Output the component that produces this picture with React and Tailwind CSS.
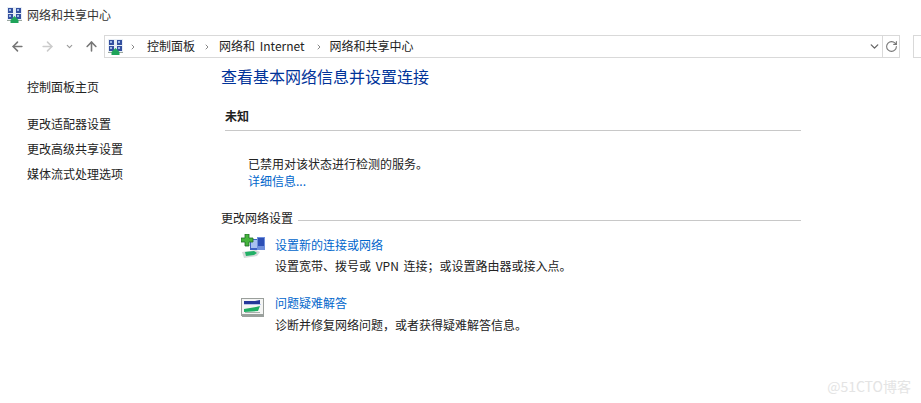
import { ArrowLeft, ArrowRight, ArrowUp, ChevronDown, ChevronRight, RotateCw } from "lucide-react";

function NetworkIcon() {
  return (
    <svg width="15" height="16" viewBox="0 0 15 16" className="shrink-0">
      <rect x="0" y="0" width="15" height="14" fill="#e8eef5" />
      <rect x="1" y="1" width="5" height="5" fill="#34509f" />
      <rect x="9" y="1" width="5" height="5" fill="#34509f" />
      <rect x="1" y="7" width="5" height="5" fill="#34509f" />
      <rect x="9" y="7" width="5" height="5" fill="#34509f" />
      <rect x="2" y="2" width="2" height="2" fill="#9db8e8" />
      <rect x="10" y="2" width="2" height="2" fill="#9db8e8" />
      <rect x="2" y="8" width="2" height="2" fill="#9db8e8" />
      <rect x="10" y="8" width="2" height="2" fill="#9db8e8" />
      <rect x="0" y="13" width="15" height="1" fill="#9aa7a0" />
      <path d="M7.5 9l4 4v3h-8v-3z" fill="#1fa45a" />
    </svg>
  );
}

function NewConnectionIcon() {
  return (
    <svg width="25" height="25" viewBox="0 0 25 25" className="shrink-0">
      <rect x="9" y="5" width="11" height="11" fill="#3f63c4" />
      <rect x="10" y="6" width="9" height="8" fill="#a9c1f0" />
      <rect x="16" y="3" width="8" height="13" fill="#6f8fdc" />
      <rect x="17" y="4" width="6" height="8" fill="#2d4fb5" />
      <path d="M4 0h4v4h4v4H8v4H4V8H0V4h4z" fill="#46b43c" stroke="#1d6b26" strokeWidth="0.8" />
      <path d="M1 18l14-2 4 2-3 4-13 2z" fill="#d5dada" />
      <path d="M4 18l9-1 3 2-3 2-8 1z" fill="#22b066" />
    </svg>
  );
}

function TroubleshootIcon() {
  return (
    <svg width="23" height="19" viewBox="0 0 23 19" className="shrink-0 mt-[5px]">
      <rect x="0.5" y="0.5" width="22" height="17" fill="#f4f5f4" stroke="#9a9f9b" />
      <rect x="1" y="16" width="22" height="3" fill="#9aa09c" />
      <path d="M3 3h11l5-1v4H3z" fill="#24389a" />
      <path d="M3 6h17v1H3z" fill="#b9c6ea" />
      <path d="M3 11l12-2 4-1-2 5-14 1z" fill="#1fae62" />
      <path d="M4 14h15v1H4z" fill="#aab0ac" />
    </svg>
  );
}

export default function App() {
  return (
    <div className="w-[921px] h-[403px] overflow-hidden bg-white text-[12px] text-[#222] font-['Noto_Sans_CJK_SC','Noto_Sans',sans-serif] relative">
      <div className="h-[30px] flex items-center pl-[7px] gap-[5px]">
        <NetworkIcon />
        <span className="text-[#333]">网络和共享中心</span>
      </div>

      <div className="h-[27px] mt-[5px] flex items-start">
        <div className="w-[104px] h-[23px] shrink-0 flex items-center pl-[10px] text-[#777]">
          <ArrowLeft size={15} strokeWidth={2.5} />
          <ArrowRight size={15} strokeWidth={2.5} className="ml-[15px] text-[#ccc]" />
          <ChevronDown size={9} strokeWidth={3} className="ml-[10px] text-[#999]" />
          <ArrowUp size={15} strokeWidth={2.5} className="ml-[10px]" />
        </div>
        <div className="w-[796px] h-[23px] shrink-0 border border-[#d9d9d9] flex items-center">
          <div className="flex-1 flex items-center pl-[3px]">
            <NetworkIcon />
            <ChevronRight size={8} strokeWidth={3} className="ml-[6px] mr-[10px] text-[#888]" />
            <span className="mb-[2px]">控制面板</span>
            <ChevronRight size={8} strokeWidth={3} className="ml-[8px] mr-[8px] text-[#888]" />
            <span className="mb-[2px] [word-spacing:2px]">网络和 Internet</span>
            <ChevronRight size={8} strokeWidth={3} className="ml-[10px] mr-[7px] text-[#888]" />
            <span className="mb-[2px]">网络和共享中心</span>
          </div>
          <ChevronDown size={13} strokeWidth={2.5} className="mr-[1px] text-[#666]" />
          <div className="w-[17px] h-full border-l border-[#d9d9d9] flex items-center justify-center text-[#777]">
            <RotateCw size={13} strokeWidth={2} />
          </div>
        </div>
        <div className="ml-[13px] w-[20px] h-[23px] shrink-0 border border-[#d9d9d9]" />
      </div>

      <div className="flex">
        <div className="w-[221px] pl-[27px] pt-[15px] shrink-0">
          <div className="leading-[20px]">控制面板主页</div>
          <div className="mt-[16px] flex flex-col gap-[5px] leading-[20px] translate-y-px">
            <div>更改适配器设置</div>
            <div>更改高级共享设置</div>
            <div>媒体流式处理选项</div>
          </div>
        </div>

        <div className="w-[580px]">
          <h1 className="text-[16px] leading-[20px] pt-[4px] text-[#003399]">查看基本网络信息并设置连接</h1>
          <div className="mt-[20px] ml-[4px] pb-[4px] border-b border-[#c8c8c8] leading-[20px] font-bold">未知</div>
          <div className="mt-[24px] ml-[27px] leading-[18px]">已禁用对该状态进行检测的服务。</div>
          <div className="-mt-px ml-[27px] leading-[18px] text-[#0066cc]">详细信息...</div>

          <div className="mt-[18px] flex items-center">
            <span className="leading-[20px]">更改网络设置</span>
            <div className="flex-1 ml-[5px] mt-[4px] h-px bg-[#c8c8c8]" />
          </div>

          <div className="mt-[6px] ml-[20px] flex">
            <NewConnectionIcon />
            <div className="ml-[9px] mt-px">
              <div className="leading-[20px] text-[#0066cc]">设置新的连接或网络</div>
              <div className="leading-[20px] mt-px [word-spacing:2px]">设置宽带、拨号或 VPN 连接；或设置路由器或接入点。</div>
            </div>
          </div>

          <div className="mt-[17px] ml-[20px] flex">
            <TroubleshootIcon />
            <div className="ml-[11px]">
              <div className="leading-[20px] text-[#0066cc]">问题疑难解答</div>
              <div className="leading-[20px] mt-[2px]">诊断并修复网络问题，或者获得疑难解答信息。</div>
            </div>
          </div>
        </div>
      </div>

      <div className="absolute right-[10px] bottom-[8px] text-[14px] leading-[18px] text-[#e4e4e4]">@51CTO博客</div>
    </div>
  );
}
